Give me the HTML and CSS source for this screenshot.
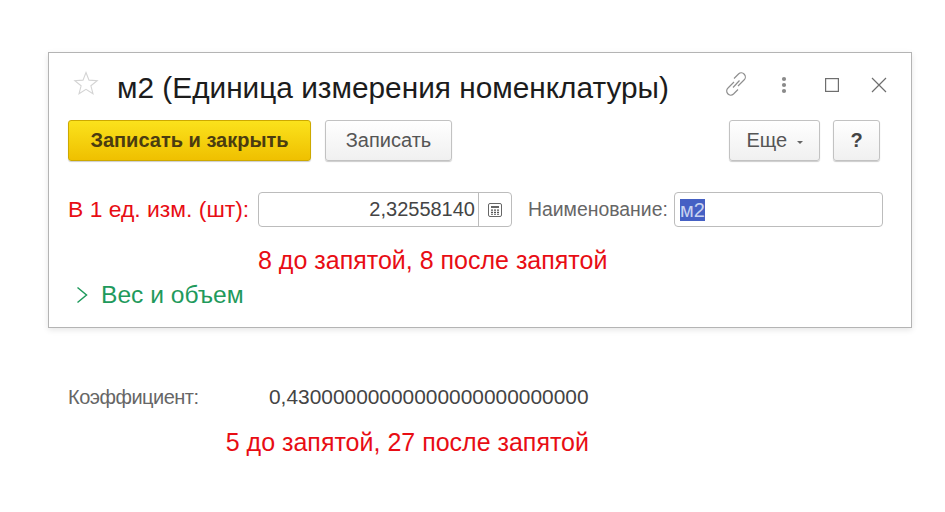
FILE: index.html
```html
<!DOCTYPE html>
<html lang="ru">
<head>
<meta charset="utf-8">
<title>м2</title>
<link rel="stylesheet" href="styles.css">
</head>
<body>
<section class="card">
  <header class="title-row">
    <svg class="star" width="26" height="26" viewBox="0 0 26 26"><path d="M13 2.500l3 7.600 8.200.5-6.300 5.200 2.100 8-7-4.400-7 4.400 2.100-8-6.300-5.200 8.200-.5z" fill="none" stroke="#d4d4d4" stroke-width="1.100"/></svg>
    <h1 class="title">м2 (Единица измерения номенклатуры)</h1>
    <div class="win-icons">
      <svg class="icon-link" width="26" height="26" viewBox="0 0 26 26" fill="none" stroke="#8e8e8e" stroke-width="1.200"><path d="M11 11L5 17a4 4 0 0 0 5.500 6l4.500-4.500"/><path d="M15 15l6-6a4 4 0 0 0-5.500-6L11 7.500"/><path d="M10 16.500l6.500-7"/></svg>
      <svg class="icon-dots" width="6" height="18" viewBox="0 0 6 18" fill="#8a8a8a"><circle cx="3" cy="3" r="2.100"/><circle cx="3" cy="9" r="2.100"/><circle cx="3" cy="15" r="2.100"/></svg>
      <svg class="icon-max" width="14" height="14" viewBox="0 0 14 14" fill="none" stroke="#6e6e6e" stroke-width="1.200"><rect x=".6" y=".6" width="12.800" height="12.800"/></svg>
      <svg class="icon-close" width="18" height="18" viewBox="0 0 18 18" fill="none" stroke="#6e6e6e" stroke-width="1.200"><path d="M2 2l14 14M16 2L2 16"/></svg>
    </div>
  </header>
  <div class="toolbar">
    <button class="btn btn-primary">Записать и закрыть</button>
    <button class="btn btn-save">Записать</button>
    <div class="spacer"></div>
    <button class="btn btn-more">Еще <span class="caret"></span></button>
    <button class="btn btn-help">?</button>
  </div>
  <div class="form-row">
    <span class="label-red">В 1 ед. изм. (шт):</span>
    <div class="field field-num">
      <span class="num-value">2,32558140</span>
      <span class="calc">
        <svg width="16" height="16" viewBox="0 0 16 16"><rect x="1.500" y="1.500" width="13" height="13" rx="1.500" fill="none" stroke="#666"/><rect x="4" y="4" width="8" height="2" fill="#666"/><path d="M4 7.500h2v1.200H4zM7 7.500h2v1.200H7zM10 7.500h2v1.200h-2zM4 9.700h2v1.200H4zM7 9.700h2v1.200H7zM10 9.700h2v1.200h-2zM4 11.800h2v1H4zM7 11.800h2v1H7zM10 11.800h2v1h-2z" fill="#555"/></svg>
      </span>
    </div>
    <span class="label-gray">Наименование:</span>
    <div class="field field-name"><span class="selected">м2</span></div>
  </div>
  <p class="note note-a">8 до запятой, 8 после запятой</p>
  <div class="group">
    <svg width="12" height="18" viewBox="0 0 12 18" fill="none" stroke="#1f9a5c" stroke-width="1.500"><path d="M1.500 1.500l9 7.500-9 7.500"/></svg>
    <span>Вес и объем</span>
  </div>
</section>
<section class="below">
  <div class="coef-row">
    <span class="coef-label">Коэффициент:</span>
    <span class="coef-value">0,43000000000000000000000000</span>
  </div>
  <p class="note note-b">5 до запятой, 27 после запятой</p>
</section>
</body>
</html>
```

FILE: styles.css
```css
* { box-sizing: border-box; }
html, body { margin: 0; padding: 0; background: #fff; }
body {
  width: 945px;
  height: 512px;
  overflow: hidden;
  padding: 52px 0 0 48px;
  font-family: "Liberation Sans", Arial, sans-serif;
}
.card {
  width: 864px;
  height: 276px;
  background: #fff;
  border: 1px solid #b4b4b4;
  box-shadow: 0 2px 6px rgba(0, 0, 0, .1);
  padding: 17px 31px 0 19px;
}
.title-row {
  display: flex;
  align-items: flex-start;
  height: 35px;
  padding-left: 5px;
}
.star { margin-right: 18px; flex: none; }
.title {
  margin: 0;
  font-size: 29.800px;
  font-weight: 400;
  color: #1c1c1c;
  white-space: nowrap;
  line-height: 35px;
}
.win-icons {
  margin-left: auto;
  display: flex;
  align-items: flex-start;
  margin-right: -8px;
}
.icon-link { margin: 1px 32px 0 0; }
.icon-dots { margin: 6px 38px 0 0; }
.icon-max { margin: 8px 31px 0 0; }
.icon-close { margin-top: 6px; }
.toolbar {
  display: flex;
  align-items: center;
  margin-top: 15px;
  height: 41px;
}
.spacer { flex: 1; }
.btn {
  height: 41px;
  font: 400 20px "Liberation Sans", Arial, sans-serif;
  color: #555;
  background: linear-gradient(#fff, #f0f0f0);
  border: 1px solid #c2c2c2;
  border-radius: 3px;
  box-shadow: 0 1px 1px rgba(0, 0, 0, .2);
  padding: 0;
}
.btn-primary {
  width: 243px;
  margin-right: 14px;
  font-weight: 700;
  color: #4b3c10;
  background: linear-gradient(#fbe21c, #efc000);
  border-color: #cda900;
}
.btn-save { width: 127px; }
.btn-more { width: 91px; margin-right: 13px; }
.btn-help { width: 47px; font-weight: 700; color: #444; }
.caret {
  display: inline-block;
  width: 0;
  height: 0;
  margin-left: 4px;
  vertical-align: 3px;
  border: 3px solid transparent;
  border-top-color: #666;
  border-bottom: 0;
}
.form-row {
  display: flex;
  align-items: center;
  margin-top: 31px;
  height: 35px;
}
.label-red { flex: none; width: 190px; font-size: 22.900px; color: #e80d14; white-space: nowrap; }
.field {
  flex: none;
  height: 35px;
  background: #fff;
  border: 1px solid #bcbcbc;
  border-radius: 4px;
  display: flex;
  align-items: center;
}
.field-num { width: 254px; }
.num-value {
  flex: 1;
  text-align: right;
  padding-right: 3px;
  font-size: 20px;
  color: #444;
}
.calc {
  width: 33px;
  height: 33px;
  border-left: 1px solid #bcbcbc;
  display: flex;
  align-items: center;
  justify-content: center;
}
.label-gray { flex: none; width: 162px; padding-left: 16px; font-size: 19.400px; color: #666; white-space: nowrap; }
.field-name { width: 209px; margin-right: -3px; padding-left: 5px; }
.selected {
  background: #4560c4;
  color: #c9d3f0;
  font-size: 20px;
  line-height: 22px;
}
.note { margin: 0; color: #e80d14; font-size: 25px; white-space: nowrap; }
.note-a { margin: 21px 0 0 190px; line-height: 25px; }
.group {
  display: flex;
  align-items: center;
  gap: 13px;
  margin-top: 9px;
  margin-left: 8px;
  height: 25px;
  font-size: 24.600px;
  color: #1f9a5c;
}
.below { width: 521px; margin: 58px 0 0 20px; }
.coef-row { display: flex; height: 22px; align-items: center; }
.coef-label { width: 201px; font-size: 20px; color: #666; letter-spacing: -.5px; }
.coef-value { font-size: 20.900px; color: #444; white-space: nowrap; }
.note-b { margin-top: 22px; text-align: right; line-height: 25px; }
```
